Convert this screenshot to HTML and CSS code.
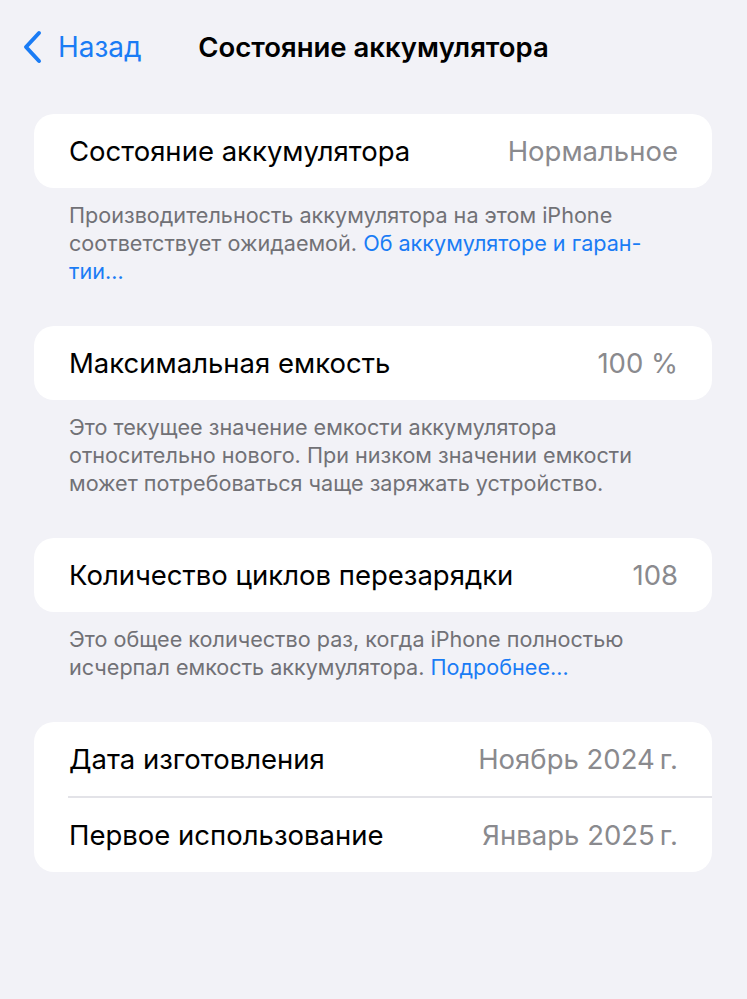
FILE: index.html
```html
<!DOCTYPE html>
<html lang="ru">
<head>
<meta charset="utf-8">
<link rel="stylesheet" href="styles.css">
</head>
<body>
<div class="page">
  <header class="nav">
    <a class="back">
      <svg class="chev" width="22" height="34" viewBox="0 0 22 34"><path d="M18 3 L5 17 L18 31" fill="none" stroke="#1a7cf5" stroke-width="4" stroke-linecap="round" stroke-linejoin="round"/></svg>
      <span>Назад</span>
    </a>
    <h1 class="title">Состояние аккумулятора</h1>
    <div></div>
  </header>

  <section class="group">
    <div class="card">
      <div class="row"><span class="label">Состояние аккумулятора</span><span class="value">Нормальное</span></div>
    </div>
    <p class="note">Производительность аккумулятора на этом iPhone<br>соответствует ожидаемой. <span class="link">Об аккумуляторе и гаран-<br>тии…</span></p>
  </section>

  <section class="group">
    <div class="card">
      <div class="row"><span class="label">Максимальная емкость</span><span class="value">100 %</span></div>
    </div>
    <p class="note">Это текущее значение емкости аккумулятора<br>относительно нового. При низком значении емкости<br>может потребоваться чаще заряжать устройство.</p>
  </section>

  <section class="group">
    <div class="card">
      <div class="row"><span class="label">Количество циклов перезарядки</span><span class="value">108</span></div>
    </div>
    <p class="note">Это общее количество раз, когда iPhone полностью<br>исчерпал емкость аккумулятора. <span class="link">Подробнее…</span></p>
  </section>

  <section class="group">
    <div class="card">
      <div class="row"><span class="label">Дата изготовления</span><span class="value">Ноябрь 2024&#8239;г.</span></div>
      <div class="sep"></div>
      <div class="row"><span class="label">Первое использование</span><span class="value">Январь 2025&#8239;г.</span></div>
    </div>
  </section>
</div>
</body>
</html>
```

FILE: styles.css
```css
html, body {
  margin: 0;
  padding: 0;
  background: #f2f2f7;
}
body {
  font-family: Inter, Roboto, "Noto Sans", sans-serif;
  color: #000;
  width: 747px;
  height: 999px;
  overflow: hidden;
}
.page {
  padding: 0 35px 0 34px;
}
.nav {
  display: grid;
  grid-template-columns: 1fr auto 1fr;
  align-items: center;
  height: 94px;
  margin: 0 -35px 0 -34px;
  padding: 0 21px;
  box-sizing: border-box;
}
.back {
  display: flex;
  align-items: center;
  gap: 15px;
  color: #1a7cf5;
  font-size: 28px;
  font-weight: 400;
}
.chev {
  display: block;
}
.title {
  margin: 0;
  font-size: 27.5px;
  font-weight: 600;
}
.group {
  margin-top: 20px;
}
.group + .group {
  margin-top: 41px;
}
.card {
  background: #fff;
  border-radius: 20px;
  overflow: hidden;
}
.row {
  display: flex;
  justify-content: space-between;
  align-items: center;
  height: 74px;
  padding: 0 34px 0 35px;
  font-size: 27.5px;
}
.value {
  color: #8a8a8e;
}
.sep {
  height: 2px;
  background: #e3e3e8;
  margin-left: 34px;
}
.note {
  margin: 13px 0 0;
  padding: 0 10px 0 35px;
  font-size: 21.6px;
  line-height: 28px;
  color: #717176;
  white-space: nowrap;
}
.link {
  color: #1a7cf5;
}
```
